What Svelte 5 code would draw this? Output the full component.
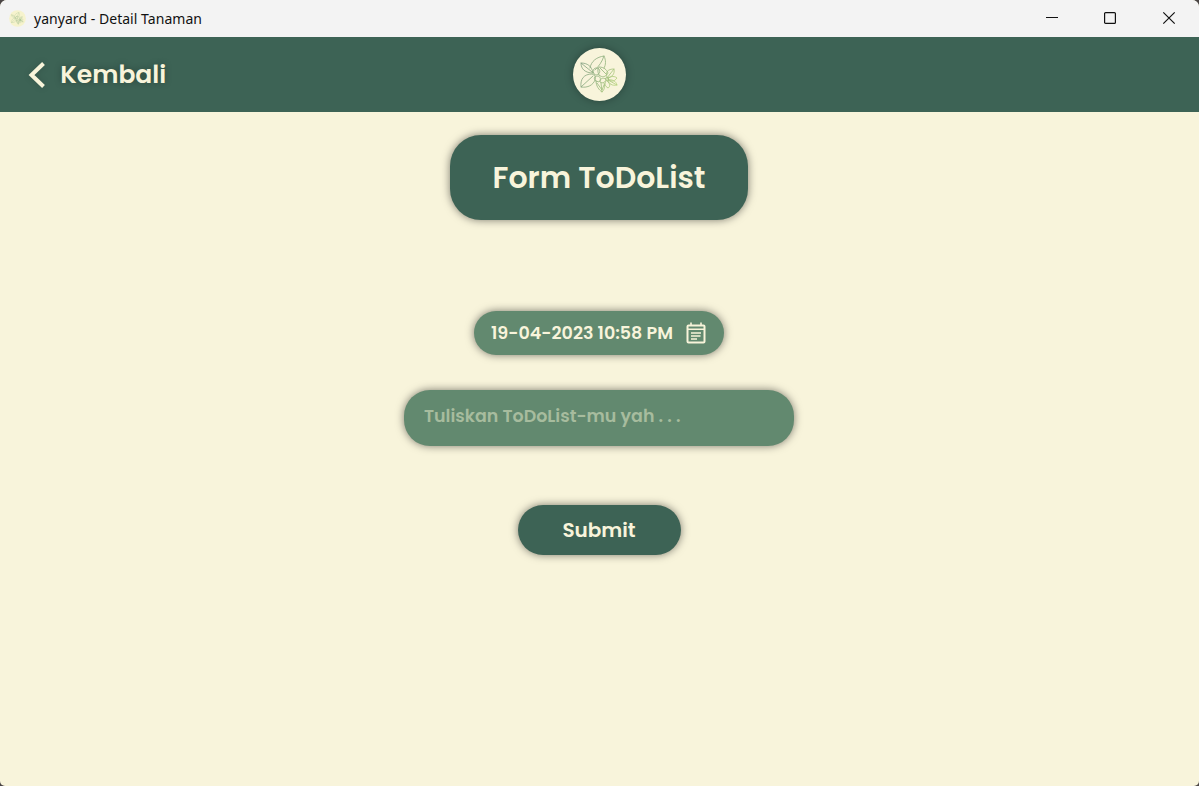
<script>
  let todo = $state('');
  const date = '19-04-2023 10:58 PM';
</script>

{#snippet plant()}
  <g fill="none" stroke-width="0.8" stroke-linejoin="round" stroke-linecap="round">
    <path d="M17 20C18 13 24 9 31 8C33 12 33 17 31 20M31 8C29 14 26 18 22 22" />
    <path d="M20 25C12 25 8 21 8 15C14 15 19 18 20 25M8 15L19 24" />
    <path d="M8 39C7 31 11 26 19 26C22 27 23 29 22 32C20 37 15 40 8 39L20 28" />
    <path d="M20 24C20 20 23 19 26 21C28 24 26 27 22 27L20 24" />
    <path d="M26 27C24 23 25 20 26 19C31 19 34 22 35 25C33 29 29 30 26 27M27 20L33 26" />
    <path d="M23 33C20 31 21 28 25 28C28 29 28 32 26 34L23 33" />
    <path d="M34 29C32 24 35 21 41 21C42 26 39 29 35 30M41 21L34 30" />
    <path d="M35 30C38 28 42 28 44 30C41 34 38 34 35 31M35 32C39 31 43 33 44 37C39 38 36 36 35 32L44 37" />
    <path d="M33 31C29 29 27 31 27 34C30 36 32 34 33 32M34 33C38 36 37 39 35 40C32 38 31 36 33 33" />
    <path d="M23 33C23 38 26 42 29 44C32 41 32 38 31 35M29 44L28 35M24 35L29 42L31 37" />
    <circle cx="34" cy="31" r="1.500" />
  </g>
{/snippet}

<div class="window">
  <div class="titlebar">
    <svg class="app-icon" viewBox="0 0 53 53">
      <circle cx="26.500" cy="26.500" r="26" fill="#f6f3cd" />
      <g stroke="#9dbd8c">{@render plant()}</g>
    </svg>
    <span class="caption">yanyard - Detail Tanaman</span>
    <div class="controls">
      <svg viewBox="0 0 14 14"><path d="M1 6.500H13" /></svg>
      <svg viewBox="0 0 14 14"><rect x="1.600" y="1.600" width="10.800" height="10.800" rx="1" /></svg>
      <svg viewBox="0 0 14 14"><path d="M1.300 1.300L12.700 12.700M12.700 1.300L1.300 12.700" /></svg>
    </div>
  </div>

  <header>
    <button class="back">
      <svg width="18" height="28" viewBox="0 0 18 28"><path d="M15.500 2.500L3.500 14L15.500 25.500" fill="none" stroke="#f8f4da" stroke-width="4" /></svg>
      <span>Kembali</span>
    </button>
    <div class="logo">
      <svg width="53" height="53" viewBox="0 0 53 53">
        <defs>
          <linearGradient id="leaf" gradientUnits="userSpaceOnUse" x1="7" y1="20" x2="44" y2="34">
            <stop offset="0" stop-color="#829f80" />
            <stop offset="0.500" stop-color="#8fb07b" />
            <stop offset="1" stop-color="#b5d27a" />
          </linearGradient>
        </defs>
        <g stroke="url(#leaf)">{@render plant()}</g>
      </svg>
    </div>
  </header>

  <main>
    <h1><span>Form ToDoList</span></h1>
    <button class="date">
      <span>{date}</span>
      <svg width="20" height="22" viewBox="0 0 20 22" fill="none" stroke="#f8f4da">
        <rect x="1.500" y="3.500" width="17" height="17" rx="1" stroke-width="2" />
        <path d="M1.500 7.300H18.500M5 0.500V4M15 0.500V4M5 11H15M5 14H14.500M5 17H11" stroke-width="1.600" />
      </svg>
    </button>
    <input bind:value={todo} placeholder="Tuliskan ToDoList-mu yah . . ." />
    <button class="submit"><span>Submit</span></button>
  </main>
</div>

<style>
  :global(body) {
    margin: 0;
    background: #4a4545;
  }
  .window {
    width: 100%;
    height: 100vh;
    display: flex;
    flex-direction: column;
    overflow: hidden;
    border-radius: 7px 7px 5px 5px;
    background: #f8f4db;
    color: #f8f4db;
    font-family: Poppins, Inter, sans-serif;
    font-weight: 600;
  }
  button,
  input {
    border: 0;
    padding: 0;
    margin: 0;
    color: inherit;
    font: inherit;
    box-sizing: border-box;
  }
  .titlebar {
    height: 37px;
    flex: none;
    display: flex;
    align-items: center;
    background: #f3f3f3;
    color: #111;
    padding-left: 9px;
  }
  .app-icon {
    width: 17px;
    height: 17px;
    margin-right: 8px;
  }
  .caption {
    font: 400 14px/20px "Segoe UI", "Noto Sans", sans-serif;
    letter-spacing: 0.04px;
  }
  .controls {
    margin-left: auto;
    display: flex;
    gap: 44.500px;
    padding: 0 23px 1px 0;
  }
  .controls svg {
    width: 14px;
    height: 14px;
    fill: none;
    stroke: #111;
    stroke-width: 1.200;
  }
  .controls svg:nth-child(2) {
    margin: 0 0.500px 0 -0.500px;
  }
  header {
    height: 75px;
    flex: none;
    display: grid;
    grid-template-columns: 1fr 53px 1fr;
    align-items: center;
    background: #3d6355;
  }
  .back {
    justify-self: start;
    display: flex;
    align-items: center;
    gap: 14.200px;
    padding-left: 28px;
    background: none;
    font-size: 25px;
    line-height: 38px;
    text-shadow: 0 0 7px rgba(0, 0, 0, 0.3);
  }
  .back svg {
    filter: drop-shadow(0 0 3px rgba(0, 0, 0, 0.15));
  }
  .logo {
    width: 53px;
    height: 53px;
    border-radius: 50%;
    background: #f8f4db;
    box-shadow: 0 0 8px rgba(0, 0, 0, 0.3);
  }
  .logo svg {
    display: block;
  }
  main {
    flex: 1;
    display: flex;
    flex-direction: column;
    align-items: center;
    padding: 23px 1px 0 0;
  }
  h1,
  .date,
  input,
  .submit {
    box-shadow: 0 0 8px rgba(0, 0, 0, 0.5);
  }
  h1 {
    width: 298px;
    height: 85px;
    margin: 0 0 91px;
    display: grid;
    place-items: center;
    border-radius: 31px;
    background: #3d6355;
    font-size: 30px;
    font-weight: 600;
  }
  .date {
    width: 250px;
    height: 44px;
    margin-bottom: 35px;
    padding: 0 18px 1px 17px;
    display: flex;
    align-items: center;
    justify-content: space-between;
    border-radius: 22px;
    background: #62896f;
    font-size: 17.500px;
  }
  input {
    width: 390px;
    height: 56px;
    margin-bottom: 59px;
    padding: 0 20px 4px;
    border-radius: 26px;
    outline: 0;
    background: #62896f;
    font-size: 17.450px;
  }
  input::placeholder {
    color: #a7bc9e;
    opacity: 1;
  }
  .submit {
    width: 163px;
    height: 50px;
    border-radius: 25px;
    background: #3d6355;
    font-size: 20px;
  }
</style>
